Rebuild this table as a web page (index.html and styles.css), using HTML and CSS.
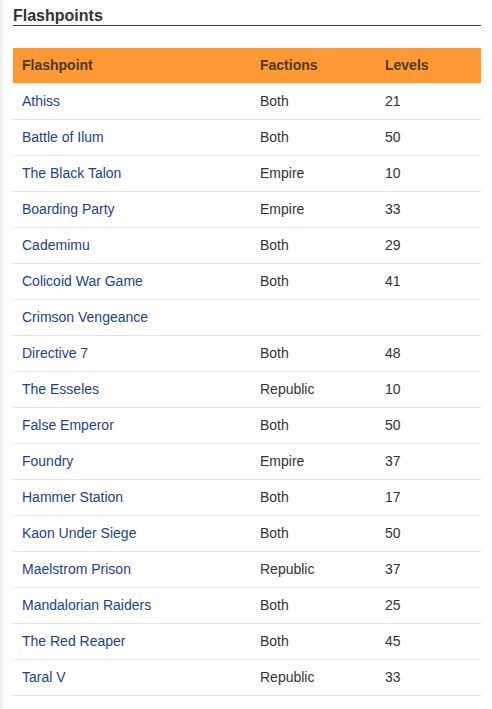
FILE: index.html
```html
<!DOCTYPE html>
<html lang="en">
<head>
<meta charset="utf-8">
<title>Flashpoints</title>
<link rel="stylesheet" href="styles.css">
</head>
<body>
<div class="page">
  <h2 class="section-title">Flashpoints</h2>
  <table class="fp-table">
    <thead>
      <tr><th class="c1">Flashpoint</th><th class="c2">Factions</th><th class="c3">Levels</th></tr>
    </thead>
    <tbody>
      <tr><td><a href="#">Athiss</a></td><td>Both</td><td>21</td></tr>
      <tr><td><a href="#">Battle of Ilum</a></td><td>Both</td><td>50</td></tr>
      <tr><td><a href="#">The Black Talon</a></td><td>Empire</td><td>10</td></tr>
      <tr><td><a href="#">Boarding Party</a></td><td>Empire</td><td>33</td></tr>
      <tr><td><a href="#">Cademimu</a></td><td>Both</td><td>29</td></tr>
      <tr><td><a href="#">Colicoid War Game</a></td><td>Both</td><td>41</td></tr>
      <tr><td><a href="#">Crimson Vengeance</a></td><td></td><td></td></tr>
      <tr><td><a href="#">Directive 7</a></td><td>Both</td><td>48</td></tr>
      <tr><td><a href="#">The Esseles</a></td><td>Republic</td><td>10</td></tr>
      <tr><td><a href="#">False Emperor</a></td><td>Both</td><td>50</td></tr>
      <tr><td><a href="#">Foundry</a></td><td>Empire</td><td>37</td></tr>
      <tr><td><a href="#">Hammer Station</a></td><td>Both</td><td>17</td></tr>
      <tr><td><a href="#">Kaon Under Siege</a></td><td>Both</td><td>50</td></tr>
      <tr><td><a href="#">Maelstrom Prison</a></td><td>Republic</td><td>37</td></tr>
      <tr><td><a href="#">Mandalorian Raiders</a></td><td>Both</td><td>25</td></tr>
      <tr><td><a href="#">The Red Reaper</a></td><td>Both</td><td>45</td></tr>
      <tr><td><a href="#">Taral V</a></td><td>Republic</td><td>33</td></tr>
    </tbody>
  </table>
</div>
</body>
</html>
```
FILE: styles.css
```css
html, body {
  margin: 0;
  padding: 0;
}
body {
  background: linear-gradient(to right, #ececec 0, #f7f7f7 3px, #ffffff 6px);
  font-family: "Liberation Sans", Arial, sans-serif;
  color: #333;
  min-height: 709px;
}
.page {
  padding: 0 11px 0 13px;
}
.section-title {
  margin: 0;
  padding-top: 7px;
  font-size: 16px;
  line-height: 18px;
  font-weight: bold;
  color: #333;
  border-bottom: 1px solid #3a3a3a;
}
.fp-table {
  margin-top: 22px;
  width: 468px;
  border-collapse: collapse;
  font-size: 14px;
}
.fp-table th {
  background: #ff9933;
  color: #4a3a28;
  font-weight: bold;
  text-align: left;
  height: 35px;
  padding: 0 9px;
  border-bottom: 1px solid #f3e3d3;
  box-sizing: border-box;
}
.fp-table td {
  height: 36px;
  padding: 0 9px;
  border-bottom: 1px solid #e2e2e2;
  color: #333;
  box-sizing: border-box;
}
.fp-table .c1 { width: 238px; }
.fp-table .c2 { width: 125px; }
.fp-table .c3 { width: 105px; }
.fp-table a {
  color: #1c3f8c;
  text-decoration: none;
}
```
